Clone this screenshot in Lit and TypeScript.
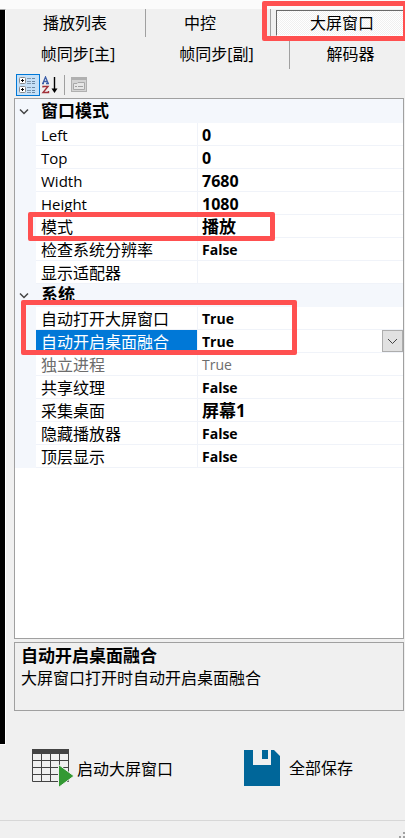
import { LitElement, html, css, svg, nothing } from "lit";
import { customElement, property, state } from "lit/decorators.js";
import { classMap } from "lit/directives/class-map.js";

interface Item {
  label: string;
  value: string;
  kind?: "num" | "cjk";
  latin?: boolean;
  readonly?: boolean;
  selected?: boolean;
  mark?: "one" | "two";
}

interface Category {
  name: string;
  items: Item[];
}

const CATEGORIES: Category[] = [
  {
    name: "窗口模式",
    items: [
      { label: "Left", value: "0", kind: "num", latin: true },
      { label: "Top", value: "0", kind: "num", latin: true },
      { label: "Width", value: "7680", kind: "num", latin: true },
      { label: "Height", value: "1080", kind: "num", latin: true },
      { label: "模式", value: "播放", kind: "cjk", mark: "one" },
      { label: "检查系统分辨率", value: "False" },
      { label: "显示适配器", value: "" },
    ],
  },
  {
    name: "系统",
    items: [
      { label: "自动打开大屏窗口", value: "True", mark: "two" },
      { label: "自动开启桌面融合", value: "True", selected: true },
      { label: "独立进程", value: "True", readonly: true },
      { label: "共享纹理", value: "False" },
      { label: "采集桌面", value: "屏幕1", kind: "cjk" },
      { label: "隐藏播放器", value: "False" },
      { label: "顶层显示", value: "False" },
    ],
  },
];

const chevron = svg`<path d="M1 1.5 L5 5.5 L9 1.5" fill="none" stroke="#444" stroke-width="1.5"/>`;

@customElement("property-grid")
export class PropertyGrid extends LitElement {
  @property({ attribute: false }) categories: Category[] = [];
  @state() private closed = new Set<string>();

  static styles = css`
    :host {
      display: block;
      background: #fff;
      border: 1px solid #a0a0a0;
      font: 16px/20px "Open Sans", "Noto Sans CJK SC", sans-serif;
    }
    table {
      width: 100%;
      border-collapse: separate;
      border-spacing: 0;
      table-layout: fixed;
      border-top: 1px solid #f4f7fc;
    }
    .gutter { width: 21px; }
    .names { width: 162px; }
    tr { position: relative; }
    td, th {
      box-sizing: border-box;
      height: 23px;
      padding: 2px 0 0 5px;
      text-align: left;
      font-weight: 400;
      white-space: nowrap;
      border-bottom: 1px solid #f0f3f9;
    }
    .side, .category th { background: #f4f7fc; border-color: #f4f7fc; padding: 0; }
    .category th { font-size: 17px; font-weight: 700; }
    .name { border-right: 1px solid #f0f3f9; }
    .latin { font-size: 15px; }
    .value { padding-left: 4px; font-size: 14px; font-weight: 700; }
    .num { font-size: 16px; }
    .cjk { font-size: 17px; }
    .readonly th, .readonly td { color: #6d6d6d; font-weight: 400; }
    .selected .name { background: #0078d7; color: #fff; }
    .selected .value { padding-top: 0; }
    .head { display: flex; align-items: center; }
    .toggle {
      flex: none;
      width: 21px;
      height: 22px;
      margin-right: 5px;
      padding: 0 3px 0 0;
      border: 0;
      background: none;
      line-height: 0;
    }
    .pick { display: grid; grid-template-columns: 1fr 21px; height: 22px; }
    .pick select, .pick svg { grid-row: 1; }
    .pick select {
      grid-column: 1 / 3;
      appearance: none;
      border: 0;
      padding: 2px 0 0;
      background: none;
      color: #000;
      font: inherit;
      outline: none;
    }
    .pick svg {
      grid-column: 2;
      box-sizing: border-box;
      width: 21px;
      height: 22px;
      border: 1px solid #adadad;
      background: #e1e1e1;
      pointer-events: none;
    }
    .mark {
      position: absolute;
      z-index: 1;
      box-sizing: border-box;
      border: 5px solid #ff5050;
      border-radius: 2px;
      pointer-events: none;
    }
    .one { left: 13px; top: -3px; width: 247px; height: 29px; }
    .two { left: 6px; top: -7px; width: 276px; height: 55px; }
  `;

  private toggle(name: string) {
    const next = new Set(this.closed);
    if (!next.delete(name)) next.add(name);
    this.closed = next;
  }

  private item(i: Item) {
    return html`<tr class=${classMap({ selected: !!i.selected, readonly: !!i.readonly })}>
      <td class="side"></td>
      <th scope="row" class=${classMap({ name: true, latin: !!i.latin })} id=${i.selected ? "current" : nothing}>${i.label}</th>
      <td class=${classMap({ value: true, num: i.kind === "num", cjk: i.kind === "cjk" })}>
        ${i.selected
          ? html`<div class="pick">
              <select aria-labelledby="current"><option>True</option><option>False</option></select>
              <svg viewBox="0 0 19 20"><path d="M5 8 L9.5 12.5 L14 8" fill="none" stroke="#444"/></svg>
            </div>`
          : i.value}
        ${i.mark ? html`<div class="mark ${i.mark}"></div>` : nothing}
      </td>
    </tr>`;
  }

  render() {
    return html`<table>
      <colgroup><col class="gutter"><col class="names"><col></colgroup>
      ${this.categories.map((c) => html`<tbody>
        <tr class="category"><th colspan="3" scope="rowgroup"><div class="head">
          <button class="toggle" aria-label=${c.name} aria-expanded=${!this.closed.has(c.name)} @click=${() => this.toggle(c.name)}>
            <svg width="10" height="7" viewBox="0 0 10 7">${chevron}</svg>
          </button>${c.name}</div></th></tr>
        ${this.closed.has(c.name) ? nothing : c.items.map((i) => this.item(i))}
      </tbody>`)}
    </table>`;
  }
}

@customElement("app-root")
export class AppRoot extends LitElement {
  static styles = css`
    :host {
      display: flex;
      flex-direction: column;
      min-height: 100vh;
      overflow: hidden;
      background: #f0f0f0;
      color: #000;
      font: 16px/22px "Open Sans", "Noto Sans CJK SC", sans-serif;
    }
    button {
      padding: 0;
      border: 0;
      background: none;
      color: inherit;
      font: inherit;
      white-space: nowrap;
    }
    .top { height: 9px; background: #fbfbfb; }
    .body { flex: 1; display: flex; }
    .stage {
      width: 5px;
      flex: none;
      margin-bottom: 75px;
      background: #000;
      border: solid #fff;
      border-width: 0 1px 1px 0;
      border-top: 1px solid #a0a0a0;
    }
    .panel { flex: 1; min-width: 0; display: flex; flex-direction: column; }
    .tabs { display: grid; height: 28px; margin-bottom: 4px; }
    .first { grid-template-columns: 140px 125px 1fr; }
    .second { grid-template-columns: 144px 140px 1fr; }
    .tab { text-align: center; }
    .first .line { padding-right: 1px; }
    .first .line + .line { padding-right: 16px; }
    .second .tab { padding-bottom: 3px; }
    .second .line { padding-right: 6px; }
    .second .line + .tab { padding-left: 6px; }
    .line { border-right: 1px solid #a0a0a0; }
    .current { position: relative; display: flex; padding: 1px 0 1px 5px; }
    .current .tab {
      flex: 1;
      padding-left: 3px;
      border: 1px solid #fff;
      border-color: #696969 #fff #fff #696969;
      background: repeating-conic-gradient(#fff 0 25%, #f0f0f0 0 50%) 0 0 / 2px 2px;
    }
    .mark {
      position: absolute;
      left: -9px;
      top: -8px;
      right: -3px;
      height: 40px;
      box-sizing: border-box;
      border: 5px solid #ff5050;
      border-radius: 2px;
      pointer-events: none;
    }
    .tools { display: flex; align-items: center; height: 22px; padding: 1px 10px 2px; }
    .tool { display: flex; width: 24px; height: 22px; align-items: center; justify-content: center; box-sizing: border-box; }
    .tool.on { border: 1px solid #0078d7; background: #c5e0f7; }
    .tool.sort { justify-content: flex-start; padding-left: 1px; }
    .rule { width: 1px; height: 20px; margin-right: 2px; background: #a0a0a0; }
    property-grid { flex: 1; margin: 0 1px 3px 8px; }
    .help {
      box-sizing: border-box;
      height: 69px;
      margin: 0 1px 0 8px;
      padding: 2px 6px;
      border: 1px solid #a0a0a0;
    }
    .help h2, .help p { margin: 0; font-size: 16px; line-height: 22px; }
    .help h2 { font-size: 17px; }
    .actions { display: grid; grid-template-columns: 212px 1fr; padding: 34px 0 24px 26px; height: 51px; }
    .action { display: flex; align-items: center; height: 44px; }
    .action svg { flex: none; }
    .start { gap: 2px; padding-top: 3px; }
    .save { gap: 9px; padding-top: 2px; }
    .status {
      display: flex;
      align-items: flex-end;
      justify-content: flex-end;
      height: 17px;
      border-top: 1px solid #d7d7d7;
    }
  `;

  render() {
    return html`
      <div class="top"></div>
      <div class="body">
        <div class="stage"></div>
        <main class="panel">
          <nav class="tabs first">
            <button class="tab line">播放列表</button>
            <button class="tab line">中控</button>
            <div class="current"><button class="tab" aria-pressed="true">大屏窗口</button><div class="mark"></div></div>
          </nav>
          <nav class="tabs second">
            <button class="tab">帧同步[主]</button>
            <button class="tab line">帧同步[副]</button>
            <button class="tab">解码器</button>
          </nav>
          <div class="tools">
            <button class="tool on" aria-label="分类" aria-pressed="true">
              <svg width="18" height="18" viewBox="0 0 18 18">
                <g fill="#fff" stroke="#8a8a8a"><rect x=".5" y="1.5" width="6" height="6" rx="1"/><rect x=".5" y="10.500" width="6" height="6" rx="1"/></g>
                <path d="M2 4.500H5M3.500 3V6M2 13.500H5M3.500 12V15" stroke="#000"/>
                <path d="M8 2.500h4M8 5.500h4M8 7.500h4M8 11.500h4M8 14.500h4M8 16.500h4" stroke="#8298ad"/>
                <path d="M13 2.500h3M13 5.500h3M13 7.500h3M13 11.500h3M13 14.500h3M13 16.500h3" stroke="#6988a5"/>
              </svg>
            </button>
            <button class="tool sort" aria-label="字母顺序">
              <svg width="18" height="18" viewBox="0 0 18 18">
                <path d="M1 7.500h2M5 7.500h3M2 7L4.500 1L7 7M3 5.500h3" fill="none" stroke="#3d5ea8" stroke-width="1.300"/>
                <path d="M2 11.500V10.500H7L2 16.500H7.500V15" fill="none" stroke="#a23038" stroke-width="1.400"/>
                <path d="M13.500 1V15" stroke="#000" stroke-width="1.400"/><path d="M10.500 12.500h6L13.500 17z"/>
              </svg>
            </button>
            <div class="rule"></div>
            <button class="tool" aria-label="属性页" disabled>
              <svg width="16" height="16" viewBox="0 0 16 16">
                <rect x=".5" y=".5" width="15" height="14" fill="#d4d4d4" stroke="#b0b0b0"/>
                <path d="M1 2h14" stroke="#b0b0b0" stroke-width="2"/>
                <path d="M2.500 12.500V6.500H6L7 5.500H13.500V12.500Z" fill="#e6e6e6" stroke="#a8a8a8"/>
                <path d="M4 9.500h2M7 9.500h5" stroke="#a0a0a0"/>
              </svg>
            </button>
          </div>
          <property-grid .categories=${CATEGORIES}></property-grid>
          <section class="help">
            <h2>自动开启桌面融合</h2>
            <p>大屏窗口打开时自动开启桌面融合</p>
          </section>
          <div class="actions">
            <button class="action start">
              <svg width="43" height="40" viewBox="0 0 43 40">
                <path d="M0 0H37V5H0Z" fill="#434343"/>
                <path d="M.5 5V32.500H36.500V5M9.500 5V32M18.500 5V32M27.500 5V32M0 11.500H37M0 18.500H37M0 25.500H37" fill="none" stroke="#434343"/>
                <path d="M26.500 15.500L42 27L26.500 38.500Z" fill="#339933" stroke="#f0f0f0"/>
              </svg>
              <span>启动大屏窗口</span>
            </button>
            <button class="action save">
              <svg width="36" height="36" viewBox="0 0 36 36">
                <path d="M0 0H9V15H27V0H30L36 6V36H0Z" fill="#006699"/><path d="M18 0H24V9H18Z" fill="#006699"/>
              </svg>
              <span>全部保存</span>
            </button>
          </div>
        </main>
      </div>
      <footer class="status">
        <svg width="6" height="6" viewBox="0 0 6 6"><path d="M4 0h2v2H4zM0 4h2v2H0zM4 4h2v2H4z" fill="#a0a0a0"/></svg>
      </footer>`;
  }
}
